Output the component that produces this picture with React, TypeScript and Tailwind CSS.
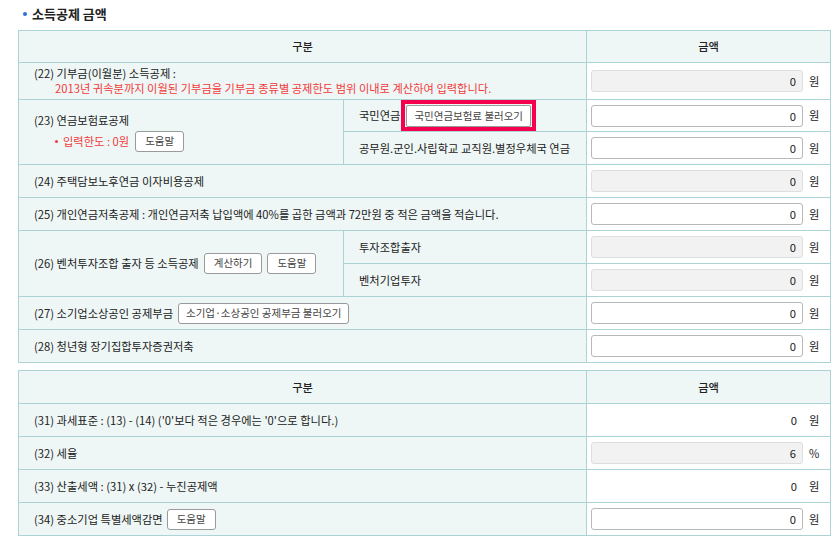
import React from "react";

const FONT = { fontFamily: '"Noto Sans CJK KR", "Noto Sans", sans-serif' };

function Btn({ children, wide = false }: { children: React.ReactNode; wide?: boolean }) {
  return (
    <button
      className={
        wide
          ? "h-[21px] px-[7px] border border-[#9a9a9a] rounded-[3px] bg-white text-[10.5px] text-[#444] leading-none inline-flex items-center"
          : "h-[21px] px-[9px] border border-[#9a9a9a] rounded-[3px] bg-white text-[10.5px] text-[#444] leading-none inline-flex items-center"
      }
    >
      {children}
    </button>
  );
}

function Amount({ mode = "edit", value = "0", unit = "원" }: { mode?: "edit" | "ro" | "text"; value?: string; unit?: string }) {
  let box;
  if (mode === "text") {
    box = <div className="w-[212px] h-[22px] pr-[6px] text-right leading-[22px]">{value}</div>;
  } else if (mode === "ro") {
    box = (
      <div className="w-[212px] h-[22px] pr-[6px] text-right leading-[20px] border border-[#dedede] rounded-[3px] bg-[#f2f2f2]">
        {value}
      </div>
    );
  } else {
    box = (
      <div className="w-[212px] h-[22px] pr-[6px] text-right leading-[20px] border border-[#b8b8b8] rounded-[3px] bg-white">
        {value}
      </div>
    );
  }
  return (
    <td className="border border-[#acd3d6] bg-white pl-[4px] align-middle">
      <div className="flex items-center">
        {box}
        <span className="ml-[6px]">{unit}</span>
      </div>
    </td>
  );
}

const L = "border border-[#acd3d6] bg-[#eef7f6] pl-[15px] align-middle";

export default function App() {
  return (
    <div className="bg-white w-[838px] h-[544px] text-[11.25px] text-[#222]" style={FONT}>
      <div className="flex items-center h-[27px] pl-[23px]">
        <span className="w-[4px] h-[4px] rounded-full bg-[#2f6fd6] mr-[5px]" />
        <span className="text-[13px] font-bold text-[#222]">소득공제 금액</span>
      </div>
      <div className="pl-[18px] pt-[3px]">
        <table className="table-fixed border-collapse w-[812px]">
          <colgroup>
            <col className="w-[325px]" />
            <col className="w-[243px]" />
            <col className="w-[244px]" />
          </colgroup>
          <tbody>
            <tr className="h-[32px]">
              <th colSpan={2} className="border border-[#acd3d6] bg-[#eef7f6] font-medium text-center">구분</th>
              <th className="border border-[#acd3d6] bg-[#eef7f6] font-medium text-center">금액</th>
            </tr>
            <tr className="h-[37px]">
              <td colSpan={2} className={L}>
                <div className="leading-[15px]">(22) 기부금(이월분) 소득공제 :</div>
                <div className="leading-[15px] pl-[21px] text-[#f23a3a]">
                  2013년 귀속분까지 이월된 기부금을 기부금 종류별 공제한도 범위 이내로 계산하여 입력합니다.
                </div>
              </td>
              <Amount mode="ro" />
            </tr>
            <tr className="h-[32px]">
              <td rowSpan={2} className={L}>
                <div className="leading-[16px]">(23) 연금보험료공제</div>
                <div className="flex items-center pl-[21px] mt-[3px]">
                  <span className="w-[3px] h-[3px] rounded-full bg-[#f23a3a] mr-[5px]" />
                  <span className="text-[#f23a3a]">입력한도 : 0원</span>
                  <span className="ml-[6px]"><Btn>도움말</Btn></span>
                </div>
              </td>
              <td className={L}>
                <div className="flex items-center">
                  <span>국민연금</span>
                  <span className="ml-[1px] border-[4px] border-[#f5004f] px-[1px] pt-[1px] inline-flex">
                    <button className="h-[22px] px-[7px] border border-[#9a9a9a] rounded-[2px] bg-white text-[10.5px] text-[#444] leading-none">
                      국민연금보험료 불러오기
                    </button>
                  </span>
                </div>
              </td>
              <Amount />
            </tr>
            <tr className="h-[33px]">
              <td className={L}>공무원.군인.사립학교 교직원.별정우체국 연금</td>
              <Amount />
            </tr>
            <tr className="h-[33px]">
              <td colSpan={2} className={L}>(24) 주택담보노후연금 이자비용공제</td>
              <Amount mode="ro" />
            </tr>
            <tr className="h-[33px]">
              <td colSpan={2} className={L}>(25) 개인연금저축공제 : 개인연금저축 납입액에 40%를 곱한 금액과 72만원 중 적은 금액을 적습니다.</td>
              <Amount />
            </tr>
            <tr className="h-[33px]">
              <td rowSpan={2} className={L}>
                <div className="flex items-center">
                  <span>(26) 벤처투자조합 출자 등 소득공제</span>
                  <span className="ml-[5px]"><Btn>계산하기</Btn></span>
                  <span className="ml-[5px]"><Btn>도움말</Btn></span>
                </div>
              </td>
              <td className={L}>투자조합출자</td>
              <Amount mode="ro" />
            </tr>
            <tr className="h-[33px]">
              <td className={L}>벤처기업투자</td>
              <Amount mode="ro" />
            </tr>
            <tr className="h-[33px]">
              <td colSpan={2} className={L}>
                <div className="flex items-center">
                  <span>(27) 소기업소상공인 공제부금</span>
                  <span className="ml-[5px]"><Btn wide>소기업·소상공인 공제부금 불러오기</Btn></span>
                </div>
              </td>
              <Amount />
            </tr>
            <tr className="h-[33px]">
              <td colSpan={2} className={L}>(28) 청년형 장기집합투자증권저축</td>
              <Amount />
            </tr>
          </tbody>
        </table>

        <table className="table-fixed border-collapse w-[812px] mt-[7px]">
          <colgroup>
            <col className="w-[568px]" />
            <col className="w-[244px]" />
          </colgroup>
          <tbody>
            <tr className="h-[33px]">
              <th className="border border-[#acd3d6] bg-[#eef7f6] font-medium text-center">구분</th>
              <th className="border border-[#acd3d6] bg-[#eef7f6] font-medium text-center">금액</th>
            </tr>
            <tr className="h-[33px]">
              <td className={L}>(31) 과세표준 : (13) - (14) ('0'보다 적은 경우에는 '0'으로 합니다.)</td>
              <Amount mode="text" />
            </tr>
            <tr className="h-[33px]">
              <td className={L}>(32) 세율</td>
              <Amount mode="ro" value="6" unit="%" />
            </tr>
            <tr className="h-[33px]">
              <td className={L}>(33) 산출세액 : (31) x (32) - 누진공제액</td>
              <Amount mode="text" />
            </tr>
            <tr className="h-[33px]">
              <td className={L}>
                <div className="flex items-center">
                  <span>(34) 중소기업 특별세액감면</span>
                  <span className="ml-[4px]"><Btn>도움말</Btn></span>
                </div>
              </td>
              <Amount />
            </tr>
          </tbody>
        </table>
      </div>
    </div>
  );
}
